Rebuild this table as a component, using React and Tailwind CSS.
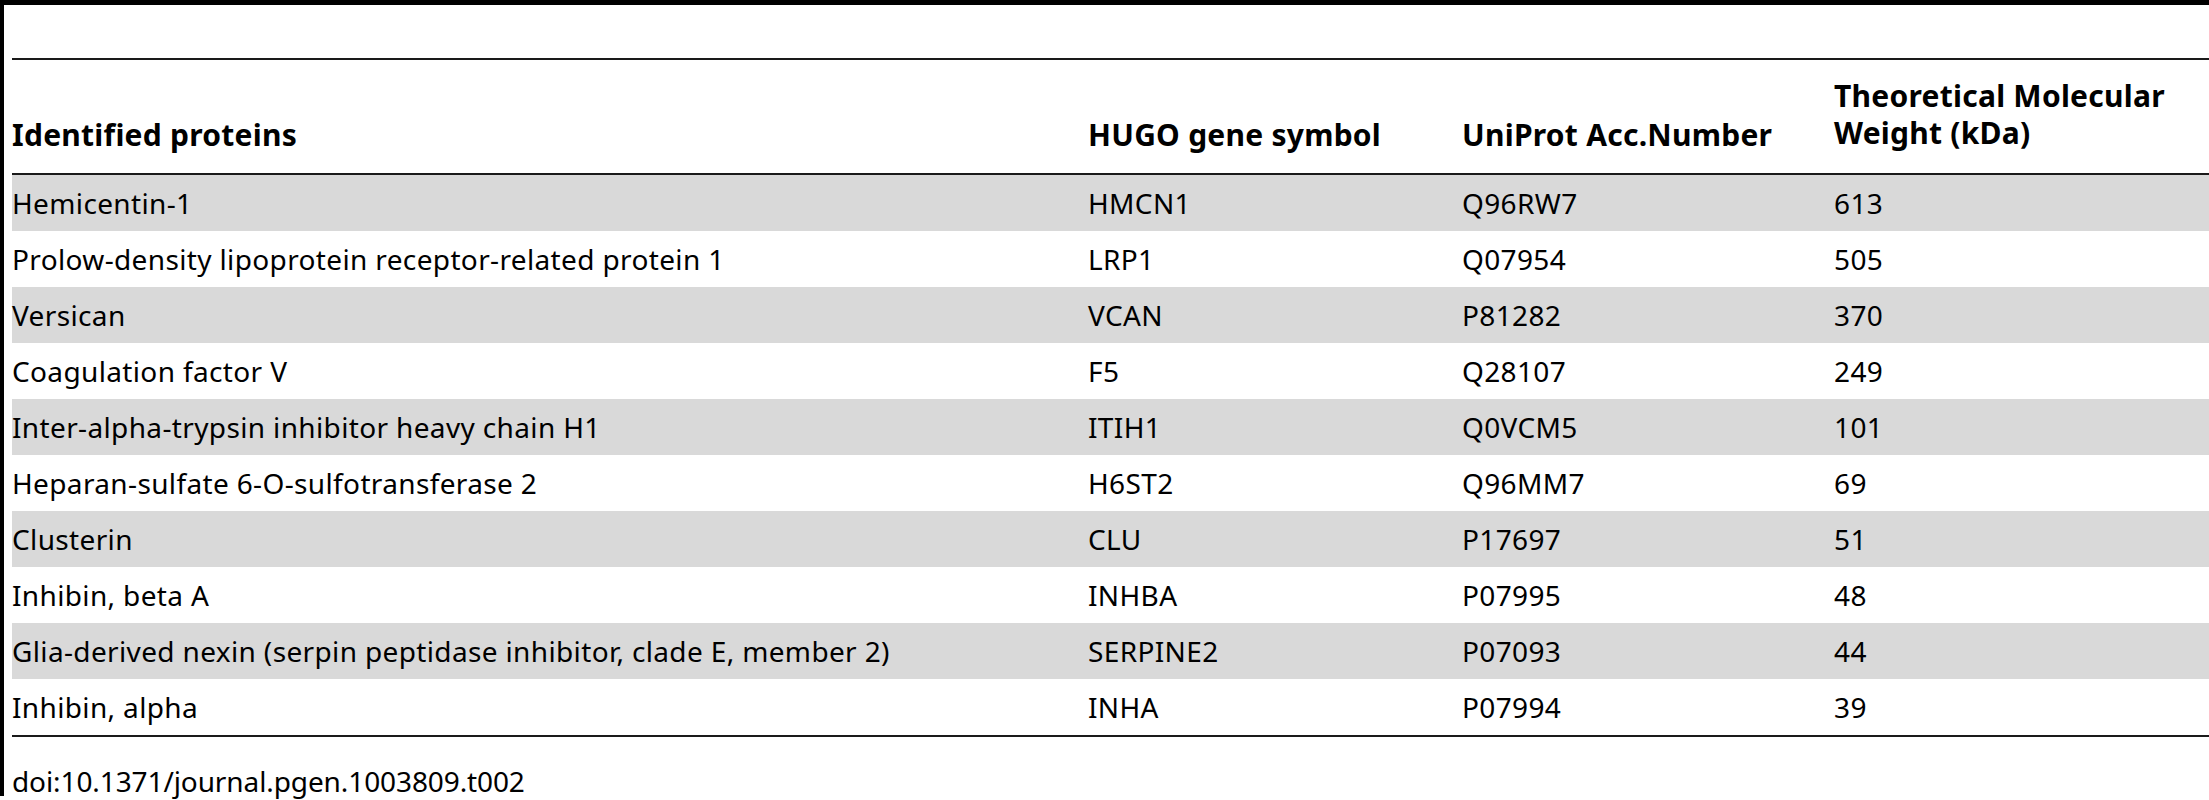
import React from "react";

const rows = [
  ["Hemicentin-1", "HMCN1", "Q96RW7", "613"],
  ["Prolow-density lipoprotein receptor-related protein 1", "LRP1", "Q07954", "505"],
  ["Versican", "VCAN", "P81282", "370"],
  ["Coagulation factor V", "F5", "Q28107", "249"],
  ["Inter-alpha-trypsin inhibitor heavy chain H1", "ITIH1", "Q0VCM5", "101"],
  ["Heparan-sulfate 6-O-sulfotransferase 2", "H6ST2", "Q96MM7", "69"],
  ["Clusterin", "CLU", "P17697", "51"],
  ["Inhibin, beta A", "INHBA", "P07995", "48"],
  ["Glia-derived nexin (serpin peptidase inhibitor, clade E, member 2)", "SERPINE2", "P07093", "44"],
  ["Inhibin, alpha", "INHA", "P07994", "39"],
];

const cols = "grid grid-cols-[1076px_374px_372px_1fr]";

const App = () => {
  return (
    <div
      className="w-[2209px] h-[800px] bg-white text-black overflow-hidden flex"
      style={{ fontFamily: '"Noto Sans", "Open Sans", sans-serif' }}
    >
      {/* left bar */}
      <div className="w-[4px] h-[796px] bg-black shrink-0" />
      <div className="flex-1 flex flex-col">
        {/* top thick rule */}
        <div className="h-[5px] bg-black -ml-[4px]" />
        <div className="pl-[8px] pt-[53px]">
          <div className="h-[2px] bg-[#1a1a1a]" />
          <div className={`${cols} h-[113px] items-end font-bold text-[30px] tracking-[0.25px] leading-[34px]`}>
            <div className="pb-[21px]">Identified proteins</div>
            <div className="pb-[21px]">HUGO gene symbol</div>
            <div className="pb-[21px]">UniProt Acc.Number</div>
            <div className="pb-[22px] leading-[37px]">
              Theoretical Molecular
              <br />
              Weight (kDa)
            </div>
          </div>
          <div className="h-[2px] bg-[#1a1a1a]" />
          <div className="text-[28px] tracking-[0.36px]">
            {rows.map((r, i) => (
              <div
                key={r[0]}
                className={`${cols} h-[56px] items-center ${i % 2 === 0 ? "bg-[#d9d9d9]" : "bg-white"}`}
              >
                {r.map((c, j) => (
                  <div key={j} className="whitespace-nowrap">
                    {c}
                  </div>
                ))}
              </div>
            ))}
          </div>
          <div className="h-[2px] bg-[#1a1a1a]" />
          <div className="mt-[25px] text-[28px] tracking-[-0.1px] leading-[38px]">
            doi:10.1371/journal.pgen.1003809.t002
          </div>
        </div>
      </div>
    </div>
  );
};

export default App;
